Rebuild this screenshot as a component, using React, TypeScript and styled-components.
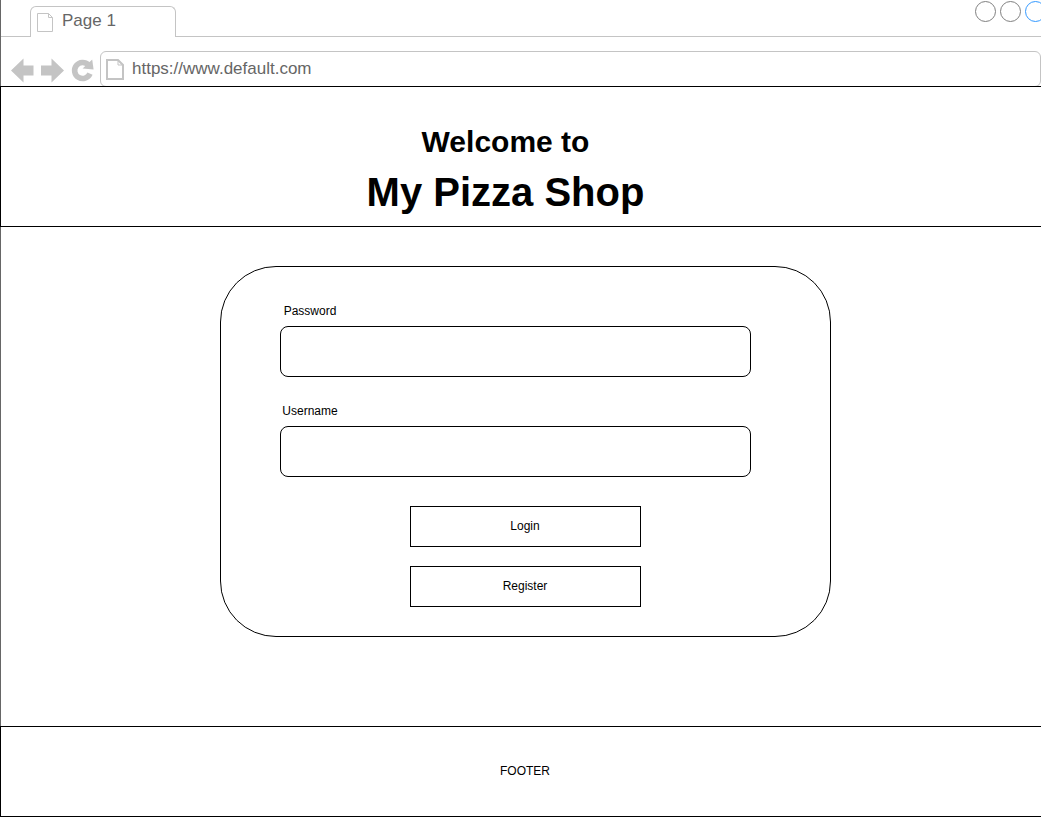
import React from "react";
import styled, { createGlobalStyle } from "styled-components";

const GlobalStyle = createGlobalStyle`
  *, *::before, *::after { box-sizing: border-box; }
  body {
    margin: 0;
    background: #fff;
    color: #000;
    font-family: "Liberation Sans", Arial, Helvetica, sans-serif;
    font-size: 12px;
    line-height: 20px;
  }
`;

const Page = styled.div`
  display: flex;
  flex-direction: column;
  min-height: 100vh;
  overflow-x: hidden;
`;

const Chrome = styled.div`
  border-left: 1px solid #666;
  color: #666;
  font-size: 17px;
`;

const TabBar = styled.div`
  display: flex;
  justify-content: space-between;
  align-items: flex-start;
  height: 37px;
  padding-left: 29px;
  border-bottom: 1px solid #c4c4c4;
`;

const Tab = styled.div`
  display: flex;
  align-items: flex-start;
  gap: 8px;
  width: 146px;
  height: 31px;
  margin-top: 6px;
  padding: 5px 6px 0;
  background: #fff;
  border: 1px solid #c4c4c4;
  border-bottom: 0;
  border-radius: 6px 6px 0 0;

  svg {
    margin-top: 1px;
  }
`;

const TabTitle = styled.span`
  line-height: 18px;
`;

const WindowControls = styled.div`
  display: flex;
  gap: 4px;
  margin-top: 1px;
  margin-right: -5px;
`;

const WindowButton = styled.button<{ $color: string }>`
  width: 21px;
  height: 21px;
  padding: 0;
  background: none;
  border: 1px solid ${(p) => p.$color};
  border-radius: 50%;
`;

const Toolbar = styled.div`
  display: flex;
  align-items: flex-end;
  gap: 7px;
  padding: 14px 0 0 10px;
`;

const NavButton = styled.button<{ $width: number }>`
  display: block;
  width: ${(p) => p.$width}px;
  height: 25px;
  margin-bottom: 4px;
  padding: 0;
  background: none;
  border: 0;

  svg {
    display: block;
    overflow: visible;
  }
`;

const AddressBar = styled.label`
  display: flex;
  flex: 1;
  gap: 8px;
  height: 36px;
  padding: 7px 5px 0;
  border: 1px solid #c4c4c4;
  border-radius: 6px;
`;

const AddressInput = styled.input`
  flex: 1;
  min-width: 0;
  height: 20px;
  padding: 0;
  color: #666;
  background: none;
  border: 0;
  outline: 0;
  font: inherit;
`;

const Header = styled.header`
  margin-top: -1px;
  padding: 37px 31px 10px 0;
  background: #fff;
  border: solid #000;
  border-width: 1px 0 1px 1px;
  position: relative;
`;

const Title = styled.h1`
  display: flex;
  flex-direction: column;
  align-items: center;
  gap: 8px;
  margin: 0;
  font-size: 40px;
  line-height: 48px;
`;

const Greeting = styled.span`
  font-size: 30px;
  line-height: 36px;
`;

const Main = styled.main`
  flex: 1;
  padding: 39px 0 89px 9px;
  border-left: 1px solid #666;
`;

const LoginCard = styled.form`
  width: 611px;
  max-width: 100%;
  margin: 0 auto;
  padding: 34px 0 29px;
  border: 1px solid #000;
  border-radius: 56px;
`;

const Fields = styled.div`
  display: flex;
  flex-direction: column;
  gap: 24px;
  padding: 0 79px 0 59px;
`;

const Field = styled.div`
  display: flex;
  flex-direction: column;
  gap: 5px;
`;

const FieldLabel = styled.label`
  width: 60px;
  text-align: center;
`;

const TextInput = styled.input`
  width: 100%;
  height: 51px;
  padding: 0 12px;
  background: #fff;
  border: 1px solid #000;
  border-radius: 8px;
  font: inherit;
`;

const Actions = styled.div`
  display: flex;
  flex-direction: column;
  align-items: center;
  gap: 19px;
  margin-top: 29px;
`;

const ActionButton = styled.button`
  width: 231px;
  height: 41px;
  padding: 0 1px 2px 0;
  color: #000;
  background: #fff;
  border: 1px solid #000;
  font: inherit;
`;

const Footer = styled.footer`
  padding: 34px 0 35px 8px;
  border: solid #000;
  border-width: 1px 0 1px 1px;
  text-align: center;
`;

const TabPageIcon = () => (
  <svg width="17" height="20" viewBox="0 0 17 20" fill="none" stroke="#c4c4c4" aria-hidden="true">
    <path d="M0.5 0.5H11.5L15.5 4.5V18.5H0.5Z M11.5 0.5V4.5H15.5" />
  </svg>
);

const AddressPageIcon = () => (
  <svg width="18" height="21" viewBox="0 0 18 21" fill="none" stroke="#c4c4c4" aria-hidden="true">
    <path d="M1 1H12L17 6V20H1Z" strokeWidth="2" />
    <path d="M12 1V6H17" strokeWidth="1" />
  </svg>
);

const BackIcon = () => (
  <svg width="23" height="25" viewBox="0 0 23 25" fill="#c4c4c4" aria-hidden="true">
    <path d="M0 12.5L12.5 0.5V7.5H22.5V17.5H12.5V24.5Z" />
  </svg>
);

const ForwardIcon = () => (
  <svg width="23" height="25" viewBox="0 0 23 25" fill="#c4c4c4" aria-hidden="true">
    <path d="M23 12.5L10.5 0.5V7.5H0V17.5H10.5V24.5Z" />
  </svg>
);

const ReloadIcon = () => (
  <svg width="22" height="25" viewBox="0 0 22 25" aria-hidden="true">
    <path d="M17.4 6.9A8 8 0 1 0 19 15.6" fill="none" stroke="#c4c4c4" strokeWidth="5.6" />
    <path d="M21.2 1.6L22.6 11.4L11.6 10.4Z" fill="#c4c4c4" />
  </svg>
);

const windowButtons = [
  { label: "Minimize", color: "#808080" },
  { label: "Maximize", color: "#808080" },
  { label: "Close", color: "#3399ff" },
];

export default function App() {
  return (
    <>
      <GlobalStyle />
      <Page>
        <Chrome>
          <TabBar>
            <Tab>
              <TabPageIcon />
              <TabTitle>Page 1</TabTitle>
            </Tab>
            <WindowControls>
              {windowButtons.map((b) => (
                <WindowButton key={b.label} type="button" aria-label={b.label} $color={b.color} />
              ))}
            </WindowControls>
          </TabBar>
          <Toolbar>
            <NavButton type="button" aria-label="Back" $width={23}>
              <BackIcon />
            </NavButton>
            <NavButton type="button" aria-label="Forward" $width={23}>
              <ForwardIcon />
            </NavButton>
            <NavButton type="button" aria-label="Reload" $width={22}>
              <ReloadIcon />
            </NavButton>
            <AddressBar>
              <AddressPageIcon />
              <AddressInput type="text" aria-label="Address" defaultValue="https://www.default.com" />
            </AddressBar>
          </Toolbar>
        </Chrome>

        <Header>
          <Title>
            <Greeting>Welcome to</Greeting>
            <span>My Pizza Shop</span>
          </Title>
        </Header>

        <Main>
          <LoginCard onSubmit={(e) => e.preventDefault()}>
            <Fields>
              <Field>
                <FieldLabel htmlFor="password">Password</FieldLabel>
                <TextInput id="password" type="password" />
              </Field>
              <Field>
                <FieldLabel htmlFor="username">Username</FieldLabel>
                <TextInput id="username" type="text" />
              </Field>
            </Fields>
            <Actions>
              <ActionButton type="submit">Login</ActionButton>
              <ActionButton type="button">Register</ActionButton>
            </Actions>
          </LoginCard>
        </Main>

        <Footer>FOOTER</Footer>
      </Page>
    </>
  );
}
